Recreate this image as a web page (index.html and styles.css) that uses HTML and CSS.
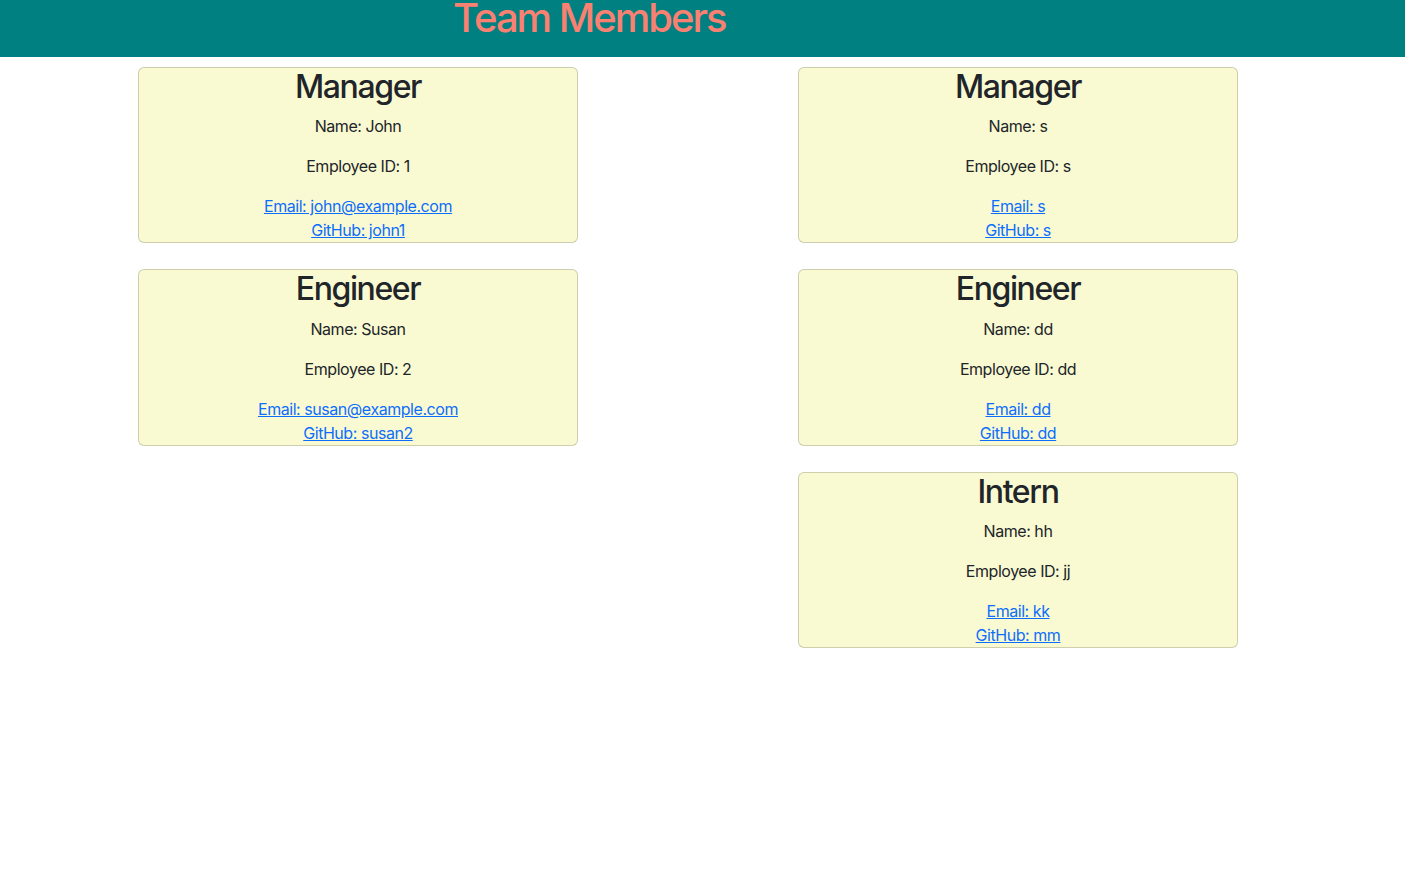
FILE: index.html
```html
<!DOCTYPE html>
<html lang="en">
<head>
<meta charset="utf-8">
<title>Team Members</title>
<link rel="stylesheet" href="styles.css">
</head>
<body>
<header class="topbar">
  <h1 class="title">Team Members</h1>
</header>
<main class="container">
  <section class="column">
    <div class="card">
      <h2 class="card-title">Manager</h2>
      <p class="info">Name: John</p>
      <p class="info">Employee ID: 1</p>
      <p class="links"><a href="#">Email: john@example.com</a><br><a href="#">GitHub: john1</a></p>
    </div>
    <div class="card">
      <h2 class="card-title">Engineer</h2>
      <p class="info">Name: Susan</p>
      <p class="info">Employee ID: 2</p>
      <p class="links"><a href="#">Email: susan@example.com</a><br><a href="#">GitHub: susan2</a></p>
    </div>
  </section>
  <section class="column">
    <div class="card">
      <h2 class="card-title">Manager</h2>
      <p class="info">Name: s</p>
      <p class="info">Employee ID: s</p>
      <p class="links"><a href="#">Email: s</a><br><a href="#">GitHub: s</a></p>
    </div>
    <div class="card">
      <h2 class="card-title">Engineer</h2>
      <p class="info">Name: dd</p>
      <p class="info">Employee ID: dd</p>
      <p class="links"><a href="#">Email: dd</a><br><a href="#">GitHub: dd</a></p>
    </div>
    <div class="card">
      <h2 class="card-title">Intern</h2>
      <p class="info">Name: hh</p>
      <p class="info">Employee ID: jj</p>
      <p class="links"><a href="#">Email: kk</a><br><a href="#">GitHub: mm</a></p>
    </div>
  </section>
</main>
</body>
</html>
```
FILE: styles.css
```css
* { box-sizing: border-box; }
html, body { margin: 0; padding: 0; }
body {
  font-family: Inter, "Liberation Sans", sans-serif;
  font-size: 16px;
  line-height: 1.5;
  letter-spacing: -0.45px;
  color: #212529;
  background: #fff;
}
.topbar {
  background: #008080;
  height: 57px;
}
.title {
  margin: 0 0 0 453px;
  font-size: 40px;
  font-weight: 500;
  line-height: 36px;
  letter-spacing: -2px;
  color: #fa8072;
}
.container {
  width: 1320px;
  margin: 10px 0 0 28px;
  display: grid;
  grid-template-columns: 1fr 1fr;
}
.column {
  display: flex;
  flex-direction: column;
  align-items: center;
  gap: 26px;
}
.card {
  width: 440px;
  background: #fafad2;
  border: 1px solid rgba(0, 0, 0, 0.175);
  border-radius: 6px;
  text-align: center;
}
.card-title {
  margin: 0 0 8px;
  font-size: 32px;
  font-weight: 500;
  line-height: 1.2;
  letter-spacing: -1.4px;
}
.info { margin: 0 0 16px; }
.links { margin: 0; }
.links a { color: #0d6efd; text-decoration: underline; }
```
